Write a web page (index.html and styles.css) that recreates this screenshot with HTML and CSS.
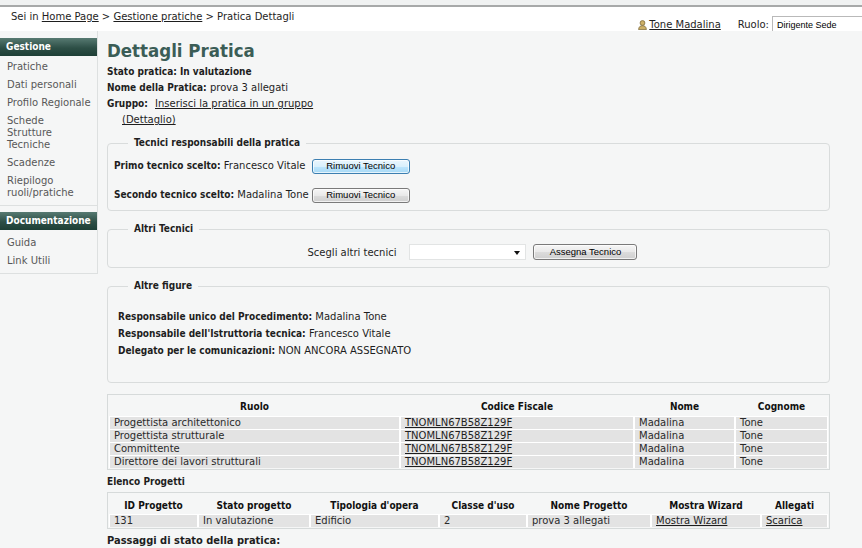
FILE: index.html
```html
<!DOCTYPE html>
<html lang="it">
<head>
<meta charset="utf-8">
<title>Dettagli Pratica</title>
<link rel="stylesheet" href="styles.css">
</head>
<body>
<div class="topstrip"></div>
<header class="header">
  <div class="crumbs">Sei in <a href="#">Home Page</a> &gt; <a href="#">Gestione pratiche</a> &gt; Pratica Dettagli</div>
  <div class="userbox">
    <svg class="usericon" width="9" height="10" viewBox="0 0 9 10"><circle cx="4.5" cy="3" r="2.4" fill="#cdb067" stroke="#7d6a3a" stroke-width="0.8"/><path d="M0.6 9.6 C0.8 6.6 2.4 5.7 4.5 5.7 C6.6 5.7 8.2 6.6 8.4 9.6 Z" fill="#cdb067" stroke="#7d6a3a" stroke-width="0.8"/></svg>
    <a href="#" class="username">Tone Madalina</a>
    <span class="ruolo">Ruolo:</span>
    <div class="rolesel">Dirigente Sede</div>
  </div>
</header>
<div class="layout">
  <aside class="sidebar">
    <div class="navhead">Gestione</div>
    <ul class="navlist">
      <li>Pratiche</li>
      <li>Dati personali</li>
      <li>Profilo Regionale</li>
      <li>Schede<br>Strutture<br>Tecniche</li>
      <li>Scadenze</li>
      <li>Riepilogo<br>ruoli/pratiche</li>
    </ul>
    <div class="navhead second">Documentazione</div>
    <ul class="navlist last">
      <li>Guida</li>
      <li>Link Utili</li>
    </ul>
  </aside>
  <main class="main">
    <h1 class="title">Dettagli Pratica</h1>
    <div class="line"><b>Stato pratica: In valutazione</b></div>
    <div class="line"><b>Nome della Pratica:</b> prova 3 allegati</div>
    <div class="line"><b class="glabel">Gruppo:</b><a href="#">Inserisci la pratica in un gruppo</a></div>
    <div class="line indent"><a href="#">(Dettaglio)</a></div>

    <fieldset class="box box1">
      <legend>Tecnici responsabili della pratica</legend>
      <div class="tecgrid">
        <div class="tl"><b>Primo tecnico scelto:</b> Francesco Vitale</div>
        <button class="btn btn-hot" type="button">Rimuovi Tecnico</button>
        <div class="tl"><b>Secondo tecnico scelto:</b> Madalina Tone</div>
        <button class="btn" type="button">Rimuovi Tecnico</button>
      </div>
    </fieldset>

    <fieldset class="box box2">
      <legend>Altri Tecnici</legend>
      <div class="altri">
        <span>Scegli altri tecnici</span>
        <div class="dropdown"><span class="arrow"></span></div>
        <button class="btn btn-wide" type="button">Assegna Tecnico</button>
      </div>
    </fieldset>

    <fieldset class="box box3">
      <legend>Altre figure</legend>
      <div class="fline"><b>Responsabile unico del Procedimento:</b> Madalina Tone</div>
      <div class="fline"><b>Responsabile dell'Istruttoria tecnica:</b> Francesco Vitale</div>
      <div class="fline"><b>Delegato per le comunicazioni:</b> NON ANCORA ASSEGNATO</div>
    </fieldset>

    <table class="grid grid1">
      <colgroup><col class="c291"><col class="c234"><col class="c101"><col class="c93"></colgroup>
      <thead><tr><th>Ruolo</th><th>Codice Fiscale</th><th>Nome</th><th>Cognome</th></tr></thead>
      <tbody>
        <tr><td>Progettista architettonico</td><td><a href="#">TNOMLN67B58Z129F</a></td><td>Madalina</td><td>Tone</td></tr>
        <tr><td>Progettista strutturale</td><td><a href="#">TNOMLN67B58Z129F</a></td><td>Madalina</td><td>Tone</td></tr>
        <tr><td>Committente</td><td><a href="#">TNOMLN67B58Z129F</a></td><td>Madalina</td><td>Tone</td></tr>
        <tr><td>Direttore dei lavori strutturali</td><td><a href="#">TNOMLN67B58Z129F</a></td><td>Madalina</td><td>Tone</td></tr>
      </tbody>
    </table>

    <div class="section"><b>Elenco Progetti</b></div>

    <table class="grid grid2">
      <colgroup><col class="c89"><col class="c112"><col class="c129"><col class="c88"><col class="c124"><col class="c110"><col class="c67"></colgroup>
      <thead><tr><th>ID Progetto</th><th>Stato progetto</th><th>Tipologia d'opera</th><th>Classe d'uso</th><th>Nome Progetto</th><th>Mostra Wizard</th><th>Allegati</th></tr></thead>
      <tbody>
        <tr><td>131</td><td>In valutazione</td><td>Edificio</td><td>2</td><td>prova 3 allegati</td><td><a href="#">Mostra Wizard</a></td><td><a href="#">Scarica</a></td></tr>
      </tbody>
    </table>

    <div class="passaggi">Passaggi di stato della pratica:</div>
  </main>
</div>
</body>
</html>
```

FILE: styles.css
```css
html, body {
  margin: 0;
  padding: 0;
  overflow: hidden;
  width: 862px;
  height: 548px;
}
body {
  background: #f5f6f6;
  font-family: "DejaVu Sans", Verdana, sans-serif;
  font-size: 10px;
  color: #1e1e1e;
}
a { color: #1e1e1e; text-decoration: underline; }
b, .title, .navhead, th, legend, .passaggi {
  font-family: "DejaVu Sans Condensed", "DejaVu Sans", sans-serif;
  font-stretch: condensed;
  font-weight: bold;
}

.topstrip {
  height: 5px;
  background: #f0f2f2;
  border-bottom: 2px solid #a7a9a9;
}
.header {
  height: 24px;
  background: #ffffff;
  display: flex;
  justify-content: space-between;
  align-items: flex-start;
  overflow: hidden;
}
.crumbs {
  padding: 4px 0 0 11px;
  line-height: 12px;
}
.userbox {
  display: flex;
  align-items: flex-start;
  padding-top: 9px;
}
.usericon { margin: 4px 2px 0 0; }
.username { line-height: 12px; margin-top: 3px; }
.ruolo { line-height: 12px; margin: 3px 3px 0 17px; }
.rolesel {
  width: 120px;
  height: 22px;
  margin-right: -30px;
  border: 1px solid #b9b9b9;
  background: #fff;
  font-family: "Liberation Sans", Arial, sans-serif;
  font-size: 9px;
  line-height: 12px;
  padding: 2px 0 0 4px;
  box-sizing: border-box;
  color: #000;
}

.layout {
  display: flex;
  align-items: flex-start;
}
.sidebar {
  width: 97px;
  padding-top: 7px;
  border-right: 1px solid #dde0e0;
  flex-shrink: 0;
}
.navhead {
  height: 18px;
  line-height: 18px;
  padding-left: 6px;
  color: #ffffff;
  font-size: 10px;
  background: linear-gradient(#577a72, #2d4f46 55%, #1e3f36);
}
.navhead.second { margin-top: 6px; }
.navlist {
  list-style: none;
  margin: 0;
  padding: 0 0 5px 0;
  border-bottom: 1px solid #dde0e0;
}
.navlist.last { padding-top: 2px; }
.navlist li {
  padding: 5px 0 1px 7px;
  line-height: 12px;
  color: #585858;
  white-space: nowrap;
}

.main {
  width: 723px;
  margin-left: 9px;
}
.title {
  margin: 9px 0 2px 0;
  font-size: 18.5px;
  line-height: 22px;
  color: #3b5d56;
}
.line { line-height: 16px; }
.glabel { display: inline-block; width: 48px; }
.indent { padding-left: 15px; }

.box {
  margin: 0;
  border: 1px solid #d9dcdc;
  border-radius: 4px;
  min-width: 0;
}
.box legend {
  margin-left: 14px;
  padding: 0 6px;
  line-height: 12px;
  font-size: 10px;
}
.box1 { margin-top: 9px; padding: 9px 6px 7px; }
.box2 { margin-top: 12px; padding: 9px 6px 7px; }
.box3 { margin-top: 12px; padding: 16px 10px 23px; }
.box3 legend { margin-left: 10px; }

.tecgrid {
  display: grid;
  grid-template-columns: auto auto;
  justify-content: start;
  column-gap: 3px;
  row-gap: 13px;
  align-items: center;
}
.tl { line-height: 16px; }

.btn {
  width: 98px;
  height: 15px;
  padding: 0 0 1px;
  margin: 0;
  font-family: "Liberation Sans", Arial, sans-serif;
  font-size: 9.5px;
  line-height: 11px;
  color: #000;
  border: 1px solid #7a7a7a;
  border-radius: 3px;
  background: linear-gradient(#f6f6f6, #e9e9e9 50%, #dcdcdc 51%, #cfcfcf);
  box-shadow: inset 0 0 0 1px rgba(255,255,255,0.7);
}
.btn-hot {
  border-color: #3c7fb1;
  background: linear-gradient(#eaf6fd, #d9f0fc 50%, #bee6fd 51%, #a7d9f5);
}
.btn-wide { width: 104px; height: 16px; }

.altri {
  display: flex;
  justify-content: center;
  align-items: center;
  height: 16px;
  padding-left: 8px;
}
.dropdown {
  position: relative;
  width: 117px;
  height: 16px;
  box-sizing: border-box;
  margin: 0 7px 0 13px;
  background: #fff;
  border: 1px solid #e2e4e4;
}
.arrow {
  position: absolute;
  right: 5px;
  top: 6px;
  border-left: 3.5px solid transparent;
  border-right: 3.5px solid transparent;
  border-top: 4px solid #111;
}

.fline { line-height: 17px; }

.grid {
  width: 723px;
  border: 1px solid #d6dada;
  border-collapse: separate;
  border-spacing: 0;
  padding: 1px;
  table-layout: fixed;
  font-size: 10px;
}
.grid th {
  font-size: 10px;
  text-align: center;
  padding: 4px 0 2px;
  line-height: 14px;
  color: #111;
}
.grid td {
  background: #e3e3e3;
  border-left: 1px solid #fff;
  border-right: 1px solid #fff;
  border-top: 1px solid #fff;
  padding: 0 0 0 4px;
  line-height: 12px;
  height: 12px;
  color: #2a2a2a;
  white-space: nowrap;
  overflow: hidden;
}
.grid1 { margin-top: 11px; }
.grid2 { margin-top: 2px; }
.grid2 th { padding: 5px 0 1px; }

.c291 { width: 291px; }
.c234 { width: 234px; }
.c101 { width: 101px; }
.c93 { width: 93px; }
.c89 { width: 89px; }
.c112 { width: 112px; }
.c129 { width: 129px; }
.c88 { width: 88px; }
.c124 { width: 124px; }
.c110 { width: 110px; }
.c67 { width: 67px; }

.section { margin-top: 4px; line-height: 16px; }
.passaggi { margin-top: 4px; line-height: 16px; font-size: 11px; }
```
